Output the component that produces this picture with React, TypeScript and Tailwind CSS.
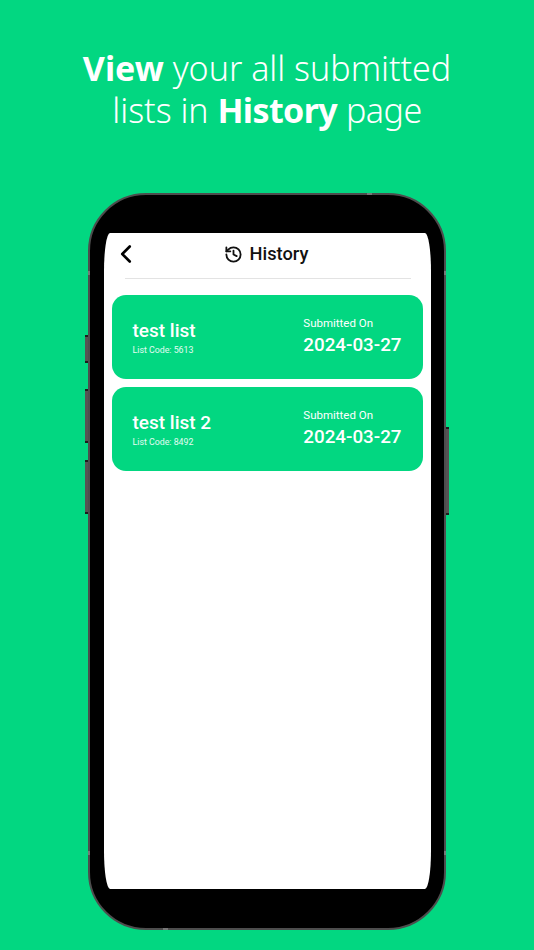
import { ChevronLeft, History } from 'lucide-react'

const lists = [
  { name: 'test list', code: '5613', date: '2024-03-27' },
  { name: 'test list 2', code: '8492', date: '2024-03-27' },
]

function SideButton({ height }: { height: string }) {
  return <div className={`w-[3px] shrink-0 bg-[#555353] border-y-2 border-[#1c1c1c] ${height}`} />
}

// little antenna bands cut in the rim
function Band({ className }: { className: string }) {
  return <div className={`absolute bg-[#777] ${className}`} />
}

export default function App() {
  return (
    <div className="w-[534px] h-[950px] overflow-hidden bg-[#02d781] flex flex-col items-center font-['Noto_Sans',sans-serif]">
      <h1 className="pt-[47px] text-[34px] leading-[42px] font-light text-white text-center">
        <b className="font-bold">View</b> your all submitted
        <br />
        lists in <b className="font-bold tracking-[-0.6px]">History</b> <span className="tracking-[-0.5px]">page</span>
      </h1>

      <div className="flex mt-[62px]">
        <div className="flex flex-col pt-[142px]">
          <SideButton height="h-[28px]" />
          <div className="h-[26px] shrink-0" />
          <SideButton height="h-[54px]" />
          <div className="h-[17px] shrink-0" />
          <SideButton height="h-[54px]" />
        </div>

        <div className="relative w-[358px] h-[737px] rounded-[58px] bg-black border-2 border-[#4d4d4d] flex justify-center pt-[38px]">
          <Band className="left-[-2px] top-[76px] w-[2px] h-[4px]" />
          <Band className="right-[-2px] top-[76px] w-[2px] h-[4px]" />
          <Band className="left-[-2px] top-[656px] w-[2px] h-[4px]" />
          <Band className="right-[-2px] top-[656px] w-[2px] h-[4px]" />
          <Band className="left-[277px] top-[-2px] w-[5px] h-[2px]" />
          <Band className="left-[73px] bottom-[-2px] w-[5px] h-[2px]" />

          <div className="w-[327px] h-[656px] bg-white rounded-[6px/38px] font-['Roboto',sans-serif] flex flex-col">
            <div className="flex items-center pl-[7px] pr-[20px] h-[41px] pt-[1px]">
              <ChevronLeft className="text-black shrink-0" size={30} strokeWidth={2.1} />
              <div className="flex items-center gap-[7px] pl-[83px]">
                <History size={19} strokeWidth={2.3} className="text-[#111]" />
                <span className="text-[18.3px] font-medium text-[#111]">History</span>
              </div>
            </div>
            <div className="ml-[21px] mr-[20px] mt-[4px] border-b border-[#e3e3e3]" />

            <div className="flex flex-col gap-[8px] mt-[16px] px-[8px]">
              {lists.map((list) => (
                <div key={list.code} className="h-[84px] rounded-[14px] bg-[#02d781] text-white flex items-center justify-between px-[21px]">
                  <div className="pt-[1px]">
                    <div className="text-[19px] leading-[21px] font-medium">{list.name}</div>
                    <div className="text-[8.8px] leading-[12px] mt-[3px] text-white/90">List Code: {list.code}</div>
                  </div>
                  <div className="pb-[2px]">
                    <div className="text-[11.5px] leading-[14px]">Submitted On</div>
                    <div className="text-[18.8px] leading-[24px] font-medium mt-[3px]">{list.date}</div>
                  </div>
                </div>
              ))}
            </div>
          </div>
        </div>

        <div className="flex flex-col pt-[234px]">
          <SideButton height="h-[88px]" />
        </div>
      </div>
    </div>
  )
}
